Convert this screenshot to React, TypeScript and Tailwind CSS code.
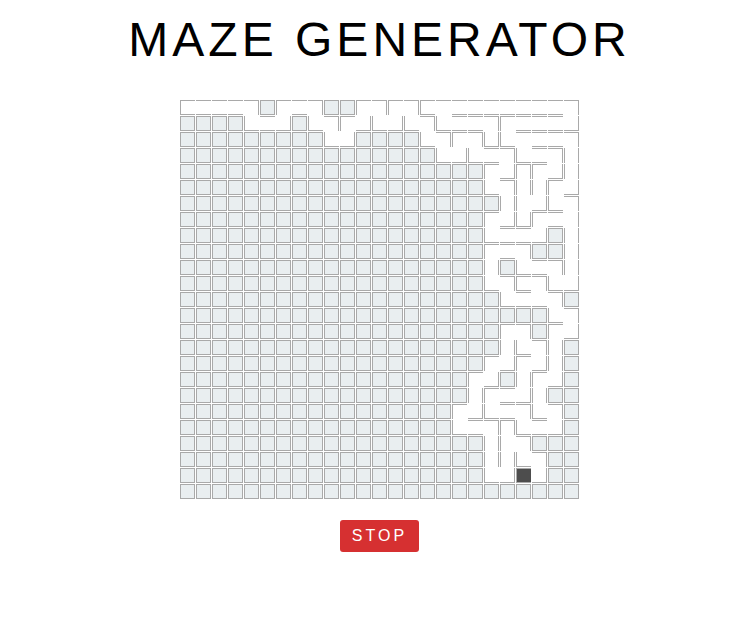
const ROWS = [
  "d5553x953xx9393d155555553",
  "xxxxc56xc396c6c3c55395556",
  "xxxxxxxxxc6xxxxc393ec1553",
  "xxxxxxxxxxxxxxxxc6c53c53a",
  "xxxxxxxxxxxxxxxxxxx96b96a",
  "xxxxxxxxxxxxxxxxxxxc3aa96",
  "xxxxxxxxxxxxxxxxxxxxa86c3",
  "xxxxxxxxxxxxxxxxxxx96e952",
  "xxxxxxxxxxxxxxxxxxxc556xa",
  "xxxxxxxxxxxxxxxxxxx953xxa",
  "xxxxxxxxxxxxxxxxxxxaxc53a",
  "xxxxxxxxxxxxxxxxxxxc3d3c6",
  "xxxxxxxxxxxxxxxxxxxxc543x",
  "xxxxxxxxxxxxxxxxxxxxxxxc3",
  "xxxxxxxxxxxxxxxxxxxx93x96",
  "xxxxxxxxxxxxxxxxxxxxac3ax",
  "xxxxxxxxxxxxxxxxxxx9696ax",
  "xxxxxxxxxxxxxxxxxx96xa96x",
  "xxxxxxxxxxxxxxxxxxa956axx",
  "xxxxxxxxxxxxxxxxx96c53c3x",
  "xxxxxxxxxxxxxxxxxc53bc56x",
  "xxxxxxxxxxxxxxxxxxxa83xxx",
  "xxxxxxxxxxxxxxxxxxxaac3xx",
  "xxxxxxxxxxxxxxxxxxxc6o6xx",
  "xxxxxxxxxxxxxxxxxxxxxxxxx",
];

function Cell({ code }: { code: string }) {
  if (code === "x") {
    return <div className="h-[15px] w-[15px] border border-[#a9a9a9] bg-[#e9eef0]" />;
  }
  if (code === "o") {
    return <div className="h-[15px] w-[15px] border-t border-b border-l border-[#a9a9a9] bg-[#4d4d4d]" />;
  }
  const m = parseInt(code, 16);
  return (
    <div
      className={[
        "h-[15px] w-[15px] border-[#a9a9a9]",
        m & 1 ? "border-t" : "",
        m & 2 ? "border-r" : "",
        m & 4 ? "border-b" : "",
        m & 8 ? "border-l" : "",
      ].join(" ")}
    />
  );
}

export default function App() {
  return (
    <div className="flex min-h-[620px] flex-col items-center bg-white pl-[6px] font-['Liberation_Sans',Arial,sans-serif]">
      <h1 className="mt-[12px] text-[48px] leading-[55px] font-normal tracking-[4px] text-black">MAZE GENERATOR</h1>
      <div className="mt-[33px] grid grid-cols-[repeat(25,15px)] gap-px">
        {ROWS.flatMap((row, r) =>
          row.split("").map((code, c) => <Cell key={`${r}-${c}`} code={code} />)
        )}
      </div>
      <button className="mt-[21px] h-8 w-[79px] rounded-[3px] bg-[#d63031] text-base tracking-[3px] text-white">STOP</button>
    </div>
  );
}
